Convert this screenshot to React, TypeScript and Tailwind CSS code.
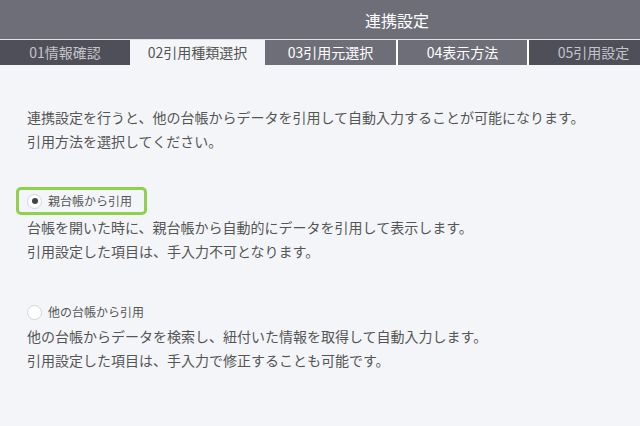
const tabs = [
  { label: '01情報確認', className: 'w-[130px] bg-[#4f4f59] text-[#c4c4ca]' },
  { label: '02引用種類選択', className: 'w-[135px] bg-[#f4f5f9] text-[#555]' },
  { label: '03引用元選択', className: 'w-[131px] bg-[#6e6e78] text-white' },
  { label: '04表示方法', className: 'w-[131px] bg-[#6e6e78] text-white' },
  { label: '05引用設定', className: 'w-[131px] bg-[#4f4f59] text-[#c4c4ca]' },
]

function Radio({ checked }: { checked: boolean }) {
  return (
    <span className="flex h-[15px] w-[15px] shrink-0 items-center justify-center rounded-full border border-[#d6d6da] bg-white">
      {checked ? <span className="h-[6px] w-[6px] rounded-full bg-[#444]" /> : null}
    </span>
  )
}

export default function App() {
  return (
    <main
      className="h-[426px] w-[640px] overflow-hidden bg-[#f4f5f9] text-[#555]"
      style={{ fontFamily: '"Noto Sans CJK JP", "Noto Sans", sans-serif' }}
    >
      <header className="flex h-[39px] items-center bg-[#6e6e78] pl-[365px] text-[16px] text-white">連携設定</header>
      <div className="h-px bg-[#e2e3e8]" />
      <nav className="flex h-[25px] bg-[#6e6e78] text-[14px]">
        {tabs.map((tab, index) => (
          <div
            key={tab.label}
            className={`flex shrink-0 items-center justify-center ${tab.className} ${index >= 3 ? 'border-l-2 border-white' : ''}`}
          >
            {tab.label}
          </div>
        ))}
      </nav>

      <section className="px-[27px] text-[14px] leading-6">
        <p className="mt-[40px]">
          連携設定を行うと、他の台帳からデータを引用して自動入力することが可能になります。
          <br />
          引用方法を選択してください。
        </p>

        <div className="mt-[34px]">
          <label className="ml-[-11px] flex h-[28px] w-fit items-center gap-[6px] rounded-[5px] border-[3px] border-[#8fd14a] pl-[8px] pr-[12px] text-[12px]">
            <Radio checked />
            親台帳から引用
          </label>
          <p>
            台帳を開いた時に、親台帳から自動的にデータを引用して表示します。
            <br />
            引用設定した項目は、手入力不可となります。
          </p>
        </div>

        <div className="mt-[37px]">
          <label className="ml-[-11px] flex h-[24px] w-fit items-center gap-[6px] pl-[11px] text-[12px]">
            <Radio checked={false} />
            他の台帳から引用
          </label>
          <p>
            他の台帳からデータを検索し、紐付いた情報を取得して自動入力します。
            <br />
            引用設定した項目は、手入力で修正することも可能です。
          </p>
        </div>
      </section>
    </main>
  )
}
